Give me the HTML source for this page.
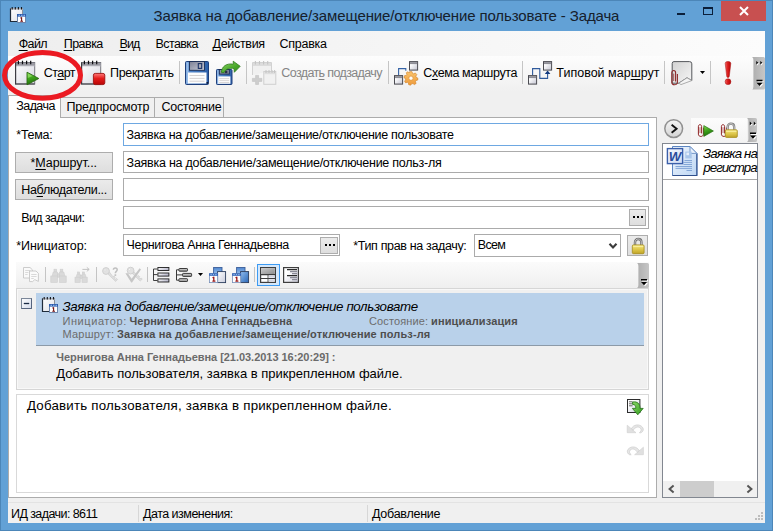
<!DOCTYPE html>
<html lang="ru"><head><meta charset="utf-8"><title>Задача</title>
<style>
html,body{margin:0;padding:0;}
body{width:773px;height:531px;overflow:hidden;position:relative;background:#62a1d6;font-family:"Liberation Sans", sans-serif;}
#w{position:absolute;left:0;top:0;width:773px;height:531px;overflow:hidden;}
#w div{position:absolute;}
.t{position:absolute;white-space:nowrap;font-family:"Liberation Sans", sans-serif;}
.t u{text-decoration:underline;text-underline-offset:2px;text-decoration-thickness:1px;}
.ic svg{display:block;overflow:visible;}
.sec{left:0;top:0;width:0;height:0;}
</style></head>
<body><div id="w">
<div class="sec" id="window-frame">
<div style="left:0px;top:0px;width:773px;height:531px;background:#62a1d6;"></div>
<div style="left:0px;top:0px;width:773px;height:1px;background:#4c86b8;"></div>
<div style="left:0px;top:0px;width:1px;height:531px;background:#4c86b8;"></div>
<div style="left:772px;top:0px;width:1px;height:531px;background:#4c86b8;"></div>
<div style="left:0px;top:530px;width:773px;height:1px;background:#4c86b8;"></div>
<div style="left:8px;top:31px;width:757px;height:492px;background:#f0f0f0;"></div>
</div>
<div class="sec" id="titlebar">
<div class="ic" style="left:10px;top:7px;"><svg width="16" height="16" viewBox="0 0 16 16"><defs><linearGradient id="ap1" x1="0" y1="0" x2="1" y2="1"><stop offset="0" stop-color="#ffffff"/><stop offset="1" stop-color="#dfe1e8"/></linearGradient></defs>
<rect x="0.5" y="1.5" width="12" height="13" fill="url(#ap1)" stroke="#8a8f98"/>
<path d="M0.5 1.5V14.5H12.5" fill="none" stroke="#1f2b3a" stroke-width="1.2"/>
<rect x="1" y="1.5" width="11.5" height="1.5" fill="#c9ccd2"/>
<g stroke="#10151c" stroke-width="1.1"><path d="M2.2 0V2.6M5.3 0V2.6M8.4 0V2.6M11.5 0V2.6"/></g>
<rect x="7.5" y="7.5" width="8" height="8" fill="#fff" stroke="#6d86ad"/>
<rect x="7" y="7" width="9" height="2.6" fill="#2c5cae"/>
<path d="M8.5 8.3H10M11 8.3H12.5M13.5 8.3H15" stroke="#9fc3f0" stroke-width="1"/>
<path d="M11.6 10.2V14M10.3 14.2H13M10.5 11.2L11.6 10.4" stroke="#741212" stroke-width="1.1" fill="none"/>
</svg></div>
<span id="t0" class="t" style="left:153.5px;top:5px;font-size:15px;line-height:21px;color:#16202c;letter-spacing:-0.130px;">Заявка на добавление/замещение/отключение пользовате - Задача</span>
<div style="left:677px;top:13px;width:8px;height:2px;background:#0b1f3a;"></div>
<div style="left:703px;top:7px;width:10px;height:8px;border:1px solid #0b1f3a;border-top-width:2px;box-sizing:border-box;"></div>
<div style="left:721px;top:1px;width:45px;height:20px;background:#c85050;"></div>
<div class="ic" style="left:739px;top:6px;"><svg width="10" height="10" viewBox="0 0 10 10"><path d="M1 1L9 9M9 1L1 9" stroke="#fff" stroke-width="2"/></svg></div>
</div>
<div class="sec" id="menubar">
<div style="left:8px;top:31px;width:757px;height:25px;background:linear-gradient(to right,#eeeeee,#fcfcfc);"></div>
<span id="t1" class="t" style="left:18.7px;top:35px;font-size:12.5px;line-height:18px;color:#000;letter-spacing:-0.588px;"><u>Ф</u>айл</span>
<span id="t2" class="t" style="left:63.7px;top:35px;font-size:12.5px;line-height:18px;color:#000;letter-spacing:-0.522px;"><u>П</u>равка</span>
<span id="t3" class="t" style="left:119.5px;top:35px;font-size:12.5px;line-height:18px;color:#000;letter-spacing:-0.875px;"><u>В</u>ид</span>
<span id="t4" class="t" style="left:155.5px;top:35px;font-size:12.5px;line-height:18px;color:#000;letter-spacing:-0.598px;">Вс<u>т</u>авка</span>
<span id="t5" class="t" style="left:212.5px;top:35px;font-size:12.5px;line-height:18px;color:#000;letter-spacing:-0.310px;"><u>Д</u>ействия</span>
<span id="t6" class="t" style="left:279.5px;top:35px;font-size:12.5px;line-height:18px;color:#000;letter-spacing:-0.250px;">Сп<u>р</u>авка</span>
</div>
<div class="sec" id="toolbar">
<div style="left:8px;top:56px;width:757px;height:35px;background:linear-gradient(#fdfdfd,#f0f0f0);"></div>
<div class="ic" style="left:15px;top:60px;"><svg width="24" height="26" viewBox="0 0 24 26"><defs><linearGradient id="np1" x1="0" y1="0" x2="1" y2="1"><stop offset="0" stop-color="#ffffff"/><stop offset="1" stop-color="#d7d8e2"/></linearGradient><linearGradient id="np1g" x1="0" y1="0" x2="0.3" y2="1"><stop offset="0" stop-color="#7fd84a"/><stop offset="0.5" stop-color="#3fa41c"/><stop offset="1" stop-color="#1f6d0c"/></linearGradient><linearGradient id="np1r" x1="0" y1="0" x2="0" y2="1"><stop offset="0" stop-color="#ff7a7a"/><stop offset="0.45" stop-color="#e41c1c"/><stop offset="1" stop-color="#b80606"/></linearGradient></defs>
<rect x="0.5" y="2.5" width="19.2" height="21.5" fill="url(#np1)" stroke="#77777f"/>
<rect x="1" y="3" width="18.5" height="3" fill="#9b9ba3"/>
<rect x="1" y="5.6" width="18.5" height="0.8" fill="#c9c9d0"/>
<path d="M0.6 2.5V24H19.7" fill="none" stroke="#3c3c42" stroke-width="1.2"/>
<g stroke="#0c0c10" stroke-width="1.2"><path d="M3.4 0.8V4.2M7.5 0.8V4.2M11.6 0.8V4.2M15.7 0.8V4.2"/></g>
<path d="M12 12.2L23.8 18.5L12 24.8Z" fill="url(#np1g)" stroke="#2a6a14" stroke-width="0.9" stroke-linejoin="round"/><path d="M12.8 13.6L17.5 16.1L12.8 18Z" fill="#a6ec7c" opacity="0.55"/></svg></div>
<span id="t7" class="t" style="left:43.7px;top:64px;font-size:12.5px;line-height:18px;color:#000;letter-spacing:-0.537px;">Ст<u>а</u>рт</span>
<div class="ic" style="left:81px;top:60px;"><svg width="24" height="26" viewBox="0 0 24 26"><defs><linearGradient id="np2" x1="0" y1="0" x2="1" y2="1"><stop offset="0" stop-color="#ffffff"/><stop offset="1" stop-color="#d7d8e2"/></linearGradient><linearGradient id="np2g" x1="0" y1="0" x2="0.3" y2="1"><stop offset="0" stop-color="#7fd84a"/><stop offset="0.5" stop-color="#3fa41c"/><stop offset="1" stop-color="#1f6d0c"/></linearGradient><linearGradient id="np2r" x1="0" y1="0" x2="0" y2="1"><stop offset="0" stop-color="#ff7a7a"/><stop offset="0.45" stop-color="#e41c1c"/><stop offset="1" stop-color="#b80606"/></linearGradient></defs>
<rect x="0.5" y="2.5" width="19.2" height="21.5" fill="url(#np2)" stroke="#77777f"/>
<rect x="1" y="3" width="18.5" height="3" fill="#9b9ba3"/>
<rect x="1" y="5.6" width="18.5" height="0.8" fill="#c9c9d0"/>
<path d="M0.6 2.5V24H19.7" fill="none" stroke="#3c3c42" stroke-width="1.2"/>
<g stroke="#0c0c10" stroke-width="1.2"><path d="M3.4 0.8V4.2M7.5 0.8V4.2M11.6 0.8V4.2M15.7 0.8V4.2"/></g>
<rect x="12.4" y="13.4" width="11.4" height="11.2" rx="1.8" fill="url(#np2r)" stroke="#9c1010" stroke-width="0.9"/></svg></div>
<span id="t8" class="t" style="left:110px;top:64px;font-size:12.5px;line-height:18px;color:#000;letter-spacing:-0.315px;">Прекрат<u>и</u>ть</span>
<div style="left:179px;top:61px;width:1px;height:23px;background:#c5c5c5;"></div>
<div style="left:246px;top:61px;width:1px;height:23px;background:#c5c5c5;"></div>
<div style="left:388px;top:61px;width:1px;height:23px;background:#c5c5c5;"></div>
<div style="left:522px;top:61px;width:1px;height:23px;background:#c5c5c5;"></div>
<div style="left:664px;top:61px;width:1px;height:23px;background:#c5c5c5;"></div>
<div style="left:710px;top:61px;width:1px;height:23px;background:#c5c5c5;"></div>
<div class="ic" style="left:185px;top:60px;"><svg width="24" height="25" viewBox="0 0 24 25"><defs><linearGradient id="fl1" x1="0" y1="0" x2="1" y2="0"><stop offset="0" stop-color="#5a8fd2"/><stop offset="1" stop-color="#2c5fa8"/></linearGradient><linearGradient id="fl1s" x1="0" y1="0" x2="1" y2="1"><stop offset="0" stop-color="#7c8094"/><stop offset="1" stop-color="#c9ccd8"/></linearGradient></defs>
<rect x="0.5" y="1.5" width="23" height="23" rx="1" fill="url(#fl1)" stroke="#1e3f7c"/>
<rect x="1.3" y="2.2" width="2.2" height="21.5" fill="#a9c8ee" opacity="0.8"/>
<rect x="4.5" y="1.5" width="15" height="8.8" fill="url(#fl1s)" stroke="#1b2e55" stroke-width="0.9"/>
<rect x="13.3" y="3.6" width="3.4" height="4.8" fill="#a8abb8" stroke="#1c3366" stroke-width="1.1"/>
<rect x="3" y="12.5" width="18.5" height="11" fill="#fdfdfd"/>
<path d="M4.5 15.5H19.5M4.5 18.4H19.5M4.5 21.2H19.5" stroke="#d0cccc" stroke-width="0.9"/>
<rect x="21.5" y="22" width="1.6" height="1.8" fill="#0d1c3c"/>
</svg></div>
<div class="ic" style="left:216px;top:60px;"><svg width="25" height="25" viewBox="0 0 25 25"><defs><linearGradient id="fl2" x1="0" y1="0" x2="1" y2="0"><stop offset="0" stop-color="#5a8fd2"/><stop offset="1" stop-color="#2c5fa8"/></linearGradient><linearGradient id="fl2g" x1="0" y1="0" x2="1" y2="1"><stop offset="0" stop-color="#8ed868"/><stop offset="0.6" stop-color="#4aa82a"/><stop offset="1" stop-color="#2f861a"/></linearGradient></defs>
<rect x="0.5" y="9.5" width="15.5" height="15" rx="0.8" fill="url(#fl2)" stroke="#1e3f7c"/>
<rect x="1.2" y="10.2" width="1.6" height="13.8" fill="#a9c8ee" opacity="0.8"/>
<rect x="3.3" y="9.5" width="10" height="4.6" fill="#8b8fa2" stroke="#1b2e55" stroke-width="0.9"/>
<rect x="9" y="10.6" width="2.4" height="2.6" fill="#2a2f4a"/>
<rect x="2.2" y="16.4" width="12.2" height="7.4" fill="#fdfdfd"/>
<path d="M3.3 18.6H13.2M3.3 20.6H13.2M3.3 22.5H13.2" stroke="#cfcccc" stroke-width="0.8"/>
<path d="M5.4 12.4C5.6 6.5 10.5 3 17.4 4.2L17.2 1.2L24.2 6.3L18.3 12.3L18 8.6C13.5 7.6 9.6 9 8.2 12.6Z" fill="url(#fl2g)" stroke="#2f7a1c" stroke-width="0.8" stroke-linejoin="round"/>
</svg></div>
<div class="ic" style="left:252px;top:60px;"><svg width="25" height="25" viewBox="0 0 25 25">
<path d="M0.5 15V2.5H19.5V11" fill="#f0f0f0" stroke="#d2d2d2"/>
<rect x="1" y="3" width="18" height="3" fill="#dcdcdc"/>
<g stroke="#c4c4c4" stroke-width="1.1"><path d="M3.4 1V4.4M7.5 1V4.4M11.6 1V4.4M15.7 1V4.4"/></g>
<rect x="11.8" y="11.5" width="12" height="12.8" fill="#f1f1f1" stroke="#cfcfcf"/>
<rect x="12.3" y="12" width="11" height="2.2" fill="#dedede"/>
<g stroke="#c4c4c4" stroke-width="1"><path d="M14 10V13M17 10V13M20 10V13M22.6 10V13"/></g>
<path d="M3.6 15.4H6.6V18.4H9.8V21.4H6.6V24.4H3.6V21.4H0.4V18.4H3.6Z" fill="#cdcdcd" stroke="#c0c0c0" stroke-width="0.6"/>
</svg></div>
<span id="t9" class="t" style="left:281.3px;top:64px;font-size:12.5px;line-height:18px;color:#858585;letter-spacing:-0.627px;">Создат<u>ь</u> подзадачу</span>
<div class="ic" style="left:394px;top:60px;"><svg width="25" height="25" viewBox="0 0 25 25"><defs><linearGradient id="sc1" x1="0" y1="0" x2="1" y2="1"><stop offset="0.25" stop-color="#ffffff"/><stop offset="1" stop-color="#c4c5d2"/></linearGradient><linearGradient id="sc1o" x1="0" y1="0" x2="0" y2="1"><stop offset="0" stop-color="#fbc46c"/><stop offset="1" stop-color="#ee9a3a"/></linearGradient></defs>
<path d="M4.6 15V8.6H11.8V10.8" fill="none" stroke="#3563a6" stroke-width="1.1"/>
<rect x="15.5" y="1.6" width="8.1" height="8.5" fill="url(#sc1)" stroke="#4c4c52"/><rect x="16" y="2.1" width="7.1" height="2" fill="#8e8e96"/><rect x="0.5" y="15.6" width="8.1" height="8.5" fill="url(#sc1)" stroke="#4c4c52"/><rect x="1" y="16.1" width="7.1" height="2" fill="#8e8e96"/>
<g transform="translate(16.8 18) scale(0.92)">
<path d="M-1.3 -6.9H1.3L1.8 -5.1L3.2 -4.5L4.9 -5.5L6.6 -3.6L5.4 -2.1L5.9 -0.7L7.6 0.1V2.2L5.7 2.7L5 4.1L5.8 5.9L3.8 7.2L2.4 6L0.9 6.3L-0.2 7.8L-2.4 7.2L-2.5 5.5L-3.8 4.7L-5.6 5.3L-6.8 3.4L-5.6 2.1L-5.8 0.6L-7.4 -0.3L-6.9 -2.5L-5.1 -2.7L-4.2 -4L-4.9 -5.7L-3 -6.8L-1.8 -5.5Z" fill="url(#sc1o)" stroke="#d2832a" stroke-width="0.7" stroke-linejoin="round"/>
<circle cx="0.2" cy="0.2" r="2.3" fill="#fffdf6" stroke="#d88c30" stroke-width="0.7"/>
</g>
</svg></div>
<span id="t10" class="t" style="left:423.3px;top:64px;font-size:12.5px;line-height:18px;color:#000;letter-spacing:-0.398px;">С<u>х</u>ема маршрута</span>
<div class="ic" style="left:528px;top:60px;"><svg width="25" height="25" viewBox="0 0 25 25"><defs><linearGradient id="ty1" x1="0" y1="0" x2="1" y2="1"><stop offset="0.25" stop-color="#ffffff"/><stop offset="1" stop-color="#c4c5d2"/></linearGradient></defs>
<path d="M4.6 15V8.6H11.8V18.4H19.6V13" fill="none" stroke="#2f5a9c" stroke-width="1.1"/>
<path d="M19.6 10.6L22.4 14H16.8Z" fill="#123a80"/>
<rect x="15.5" y="1.6" width="8.1" height="8.5" fill="url(#ty1)" stroke="#4c4c52"/><rect x="16" y="2.1" width="7.1" height="2" fill="#8e8e96"/><rect x="0.5" y="15.6" width="8.1" height="8.5" fill="url(#ty1)" stroke="#4c4c52"/><rect x="1" y="16.1" width="7.1" height="2" fill="#8e8e96"/>
</svg></div>
<span id="t11" class="t" style="left:556.3px;top:64px;font-size:12.5px;line-height:18px;color:#000;letter-spacing:0.011px;">Типовой мар<u>ш</u>рут</span>
<div class="ic" style="left:670px;top:61px;"><svg width="23" height="25" viewBox="0 0 23 25"><defs><linearGradient id="cn1" x1="0" y1="0" x2="1" y2="1"><stop offset="0" stop-color="#d2d2d2"/><stop offset="1" stop-color="#f6f6f6"/></linearGradient></defs>
<path d="M4 0.6H19.5Q21.8 0.6 21.8 2.8V19.6L17 16.8L8.8 22.2H2.2V2.4Q2.2 0.6 4 0.6Z" fill="url(#cn1)" stroke="#55585c" stroke-width="1"/>
<path d="M8.8 22.2L17 16.8L21.8 19.6L11 23.6Z" fill="#f4f4f4" stroke="#9a9a9a" stroke-width="0.8"/>
<path d="M5.6 20.5V11.8C5.6 8.8 1.8 8.8 1.8 11.8V21.2C1.8 24.6 7.4 24.6 7.4 21.2V13" fill="none" stroke="#8e2a2a" stroke-width="1.1"/>
<path d="M3.7 20V12.6" stroke="#a04444" stroke-width="0.9"/>
</svg></div>
<div class="ic" style="left:700px;top:71px;"><svg width="5" height="3" viewBox="0 0 5 3"><path d="M0 0H5L2.5 3Z" fill="#000"/></svg></div>
<div class="ic" style="left:724px;top:61px;"><svg width="8" height="25" viewBox="0 0 8 25"><defs><linearGradient id="ex1" x1="0" y1="0" x2="1" y2="0"><stop offset="0" stop-color="#f26a6a"/><stop offset="0.45" stop-color="#dc1c1c"/><stop offset="1" stop-color="#b40808"/></linearGradient></defs>
<path d="M1.2 2.4Q1.2 0.4 4 0.4Q6.8 0.4 6.8 2.4L5.3 15.2Q5.2 16.4 4 16.4Q2.8 16.4 2.7 15.2Z" fill="url(#ex1)" stroke="#a30a0a" stroke-width="0.5"/>
<circle cx="4" cy="20.7" r="2.9" fill="url(#ex1)" stroke="#a30a0a" stroke-width="0.5"/>
</svg></div>
<div class="ic" style="left:752px;top:57px;"><svg width="13" height="32.5" viewBox="0 0 13 32.5"><defs><linearGradient id="ov1332" x1="0" y1="0" x2="1" y2="0"><stop offset="0" stop-color="#aeaeae"/><stop offset="1" stop-color="#c6c6c6"/></linearGradient></defs>
<path d="M0 0H11.5Q13 0 13 1.5V31.0Q13 32.5 11.5 32.5H0Q1.4 32.1 1.4 29.5V3Q1.4 0.4 0 0Z" fill="url(#ov1332)"/>
<path d="M5.0 5v3.6l2-1.8zM9.0 5v3.6l2-1.8z" fill="#fff"/><path d="M4.3 4v3.6l2-1.8zM8.3 4v3.6l2-1.8z" fill="#000"/>
<path d="M5.5 23.8h6v1.4h-6zM5.5 26.8h6l-3 3.2z" fill="#fff"/>
<path d="M4.5 22.8h6v1.4h-6zM4.5 25.8h6l-3 3.2z" fill="#000"/>
</svg></div>
</div>
<div class="sec" id="tabs">
<div style="left:8px;top:117px;width:649px;height:381px;background:#fff;border:1px solid #acacac;box-sizing:border-box;"></div>
<div style="left:60px;top:97px;width:95px;height:21px;background:#f0f0f0;border:1px solid #acacac;box-sizing:border-box;border-bottom:none;height:20px;"></div>
<div style="left:154px;top:97px;width:70px;height:21px;background:#f0f0f0;border:1px solid #acacac;box-sizing:border-box;border-bottom:none;height:20px;"></div>
<div style="left:8px;top:95px;width:53px;height:23px;background:#fff;border:1px solid #acacac;border-bottom:none;box-sizing:border-box;"></div>
<span id="t12" class="t" style="left:16.3px;top:97px;font-size:12.5px;line-height:18px;color:#000;letter-spacing:-0.573px;">Задача</span>
<span id="t13" class="t" style="left:66.5px;top:98px;font-size:12.5px;line-height:18px;color:#000;letter-spacing:-0.165px;">Предпросмотр</span>
<span id="t14" class="t" style="left:161.5px;top:98px;font-size:12.5px;line-height:18px;color:#000;letter-spacing:-0.286px;">Состояние</span>
</div>
<div class="sec" id="task-form">
<span id="t15" class="t" style="left:16.3px;top:126px;font-size:12.5px;line-height:18px;color:#000;letter-spacing:-0.264px;">*Тема:</span>
<span id="t16" class="t" style="left:21.2px;top:209px;font-size:12.5px;line-height:18px;color:#000;letter-spacing:-0.593px;">Вид задачи:</span>
<span id="t17" class="t" style="left:16.2px;top:237px;font-size:12.5px;line-height:18px;color:#000;letter-spacing:-0.065px;">*Инициатор:</span>
<span id="t18" class="t" style="left:353.2px;top:237px;font-size:12.5px;line-height:18px;color:#000;letter-spacing:-0.344px;">*Тип прав на задачу:</span>
<div style="left:15px;top:152px;width:98px;height:21px;background:linear-gradient(#ebebeb,#dedede);border:1px solid #adadad;box-sizing:border-box;"></div>
<span id="t19" class="t" style="left:30.5px;top:154px;font-size:12.5px;line-height:18px;color:#000;letter-spacing:-0.064px;">*<u>М</u>аршрут...</span>
<div style="left:15px;top:179px;width:98px;height:21px;background:linear-gradient(#ebebeb,#dedede);border:1px solid #adadad;box-sizing:border-box;"></div>
<span id="t20" class="t" style="left:21.2px;top:181px;font-size:12.5px;line-height:18px;color:#000;letter-spacing:-0.284px;">На<u>б</u>людатели...</span>
<div style="left:123px;top:123px;width:526px;height:23px;background:#fff;border:1px solid #6ea8e2;box-sizing:border-box;"></div>
<div style="left:123px;top:151px;width:526px;height:22px;background:#fff;border:1px solid #ababab;box-sizing:border-box;"></div>
<div style="left:123px;top:178px;width:526px;height:23px;background:#fff;border:1px solid #ababab;box-sizing:border-box;"></div>
<div style="left:123px;top:206px;width:526px;height:23px;background:#fff;border:1px solid #ababab;box-sizing:border-box;"></div>
<div style="left:123px;top:234px;width:217px;height:22px;background:#fff;border:1px solid #ababab;box-sizing:border-box;"></div>
<span id="t21" class="t" style="left:126.6px;top:126px;font-size:12.5px;line-height:18px;color:#000;letter-spacing:-0.279px;">Заявка на добавление/замещение/отключение пользовате</span>
<span id="t22" class="t" style="left:126.6px;top:154px;font-size:12.5px;line-height:18px;color:#000;letter-spacing:-0.250px;">Заявка на добавление/замещение/отключение польз-ля</span>
<span id="t23" class="t" style="left:126.6px;top:236px;font-size:12.5px;line-height:18px;color:#000;letter-spacing:-0.367px;">Чернигова Анна Геннадьевна</span>
<div style="left:629px;top:209px;width:17px;height:17px;background:linear-gradient(#ebebeb,#dedede);border:1px solid #adadad;box-sizing:border-box;"></div>
<div class="ic" style="left:633px;top:216px;"><svg width="10" height="2" viewBox="0 0 10 2"><path d="M0 0h2v2h-2zM4 0h2v2h-2zM8 0h2v2h-2z" fill="#000"/></svg></div>
<div style="left:320px;top:237px;width:18px;height:17px;background:linear-gradient(#ebebeb,#dedede);border:1px solid #adadad;box-sizing:border-box;"></div>
<div class="ic" style="left:325px;top:244px;"><svg width="10" height="2" viewBox="0 0 10 2"><path d="M0 0h2v2h-2zM4 0h2v2h-2zM8 0h2v2h-2z" fill="#000"/></svg></div>
<div style="left:474px;top:234px;width:147px;height:23px;background:#fff;border:1px solid #ababab;box-sizing:border-box;"></div>
<span id="t24" class="t" style="left:477.7px;top:236px;font-size:12.5px;line-height:18px;color:#000;letter-spacing:-0.635px;">Всем</span>
<div class="ic" style="left:609px;top:243px;"><svg width="8" height="6" viewBox="0 0 8 6"><path d="M0.5 0.7L4 4.5L7.5 0.7" fill="none" stroke="#3c3c3c" stroke-width="2.1"/></svg></div>
<div style="left:627px;top:235px;width:21px;height:21px;background:linear-gradient(#ebebeb,#dedede);border:1px solid #adadad;box-sizing:border-box;"></div>
<div class="ic" style="left:630px;top:237px;"><svg width="16" height="18" viewBox="0 0 16 18"><defs><linearGradient id="lk1" x1="0" y1="0" x2="0" y2="1"><stop offset="0" stop-color="#f4e67a"/><stop offset="0.55" stop-color="#dcc548"/><stop offset="1" stop-color="#c0a428"/></linearGradient></defs>
<path d="M5 9V5.2C5 0.9 11.4 0.9 11.4 5.2V9" fill="none" stroke="#6c6c6c" stroke-width="2.4"/>
<path d="M5 9V5.2C5 0.9 11.4 0.9 11.4 5.2V9" fill="none" stroke="#d6d6d6" stroke-width="0.8"/>
<rect x="2.3" y="7.9" width="11.8" height="8.8" rx="1.2" fill="url(#lk1)" stroke="#a48c1c" stroke-width="0.8"/>
<rect x="3.2" y="8.8" width="10" height="1.3" fill="#fbf3a8" opacity="0.8"/>
</svg></div>
</div>
<div class="sec" id="history-toolbar">
<div style="left:16px;top:262px;width:633px;height:26px;background:linear-gradient(#fbfbfb,#efefef);"></div>
<div class="ic" style="left:23px;top:267px;"><svg width="16" height="16" viewBox="0 0 16 16">
<path d="M0.5 0.5H7L9.4 2.8V11H0.5Z" fill="#fafafa" stroke="#c6c6c6" stroke-width="0.9"/>
<path d="M2.2 3.5H7.4M2.2 5.5H5.4M2.2 7.5H4.6" stroke="#d2d2d2" stroke-width="0.8"/>
<path d="M6.5 4H13L15.4 6.4V14.4L11.8 12.6L9.6 14.6H6.5Z" fill="#fbfbfb" stroke="#c6c6c6" stroke-width="0.9"/>
<path d="M8.2 7.5H13.6M8.2 9.5H13.6M8.2 11.5H10.8" stroke="#d0d0d0" stroke-width="0.8"/>
</svg></div>
<div class="ic" style="left:50px;top:267px;"><svg width="17" height="16" viewBox="0 0 17 16">
<g fill="#dadada" stroke="#cecece" stroke-width="0.6">
<rect x="4" y="2.2" width="2.6" height="3"/><rect x="10.2" y="2.2" width="2.6" height="3"/>
<path d="M3.2 5H7.4L8 8.6H9L9.6 5H13.8L15 9.5H2Z"/>
<rect x="0.8" y="9" width="6.6" height="6.4"/><rect x="9.6" y="9" width="6.6" height="6.4"/>
<rect x="7.4" y="6.8" width="2.2" height="3.4"/>
</g></svg></div>
<div class="ic" style="left:74px;top:267px;"><svg width="17" height="16" viewBox="0 0 17 16">
<g fill="#dadada" stroke="#cecece" stroke-width="0.6">
<rect x="3.6" y="5" width="2" height="2.4"/><rect x="8.4" y="5" width="2" height="2.4"/>
<path d="M3 7.2H6.2L6.8 10H7.4L8 7.2H11.2L12.2 10.6H2Z"/>
<rect x="1" y="10.2" width="5.2" height="5.2"/><rect x="8" y="10.2" width="5.2" height="5.2"/>
<rect x="6.2" y="8.6" width="1.8" height="2.8"/>
</g>
<path d="M8.4 2.4H15M12.8 0.4L15.2 2.4L12.8 4.4" fill="none" stroke="#c2c2c2" stroke-width="1"/></svg></div>
<div class="ic" style="left:102px;top:267px;"><svg width="17" height="16" viewBox="0 0 17 16"><path d="M5.4 6.6L13.6 14.4L15.6 12.6L14.6 11.4L13.4 12.2L12.4 11.2L13.2 10.2L12 9L11 9.8L7.4 5Z" fill="#dedede" stroke="#cfcfcf" stroke-width="0.7"/><circle cx="4" cy="4" r="3.4" fill="#e2e2e2" stroke="#cdcdcd" stroke-width="0.9"/><circle cx="3" cy="3" r="1" fill="#f8f8f8" stroke="#d2d2d2" stroke-width="0.5"/>
<path d="M11.4 2.8C11.4 0.4 15.2 0.4 15.2 2.8C15.2 4.4 13.3 4.4 13.3 6.2" fill="none" stroke="#bfbfbf" stroke-width="1.5"/>
<rect x="12.5" y="7.3" width="1.7" height="1.6" fill="#bfbfbf"/></svg></div>
<div class="ic" style="left:125px;top:267px;"><svg width="17" height="16" viewBox="0 0 17 16"><g transform="translate(1.6 -0.4)"><path d="M5.4 6.6L13.6 14.4L15.6 12.6L14.6 11.4L13.4 12.2L12.4 11.2L13.2 10.2L12 9L11 9.8L7.4 5Z" fill="#dedede" stroke="#cfcfcf" stroke-width="0.7"/><circle cx="4" cy="4" r="3.4" fill="#e2e2e2" stroke="#cdcdcd" stroke-width="0.9"/><circle cx="3" cy="3" r="1" fill="#f8f8f8" stroke="#d2d2d2" stroke-width="0.5"/></g>
<path d="M0.4 6.2L2.8 6.2L6.6 11.8L14.6 1.2L16 2.4L7 15.4H6.2Z" fill="#c6c6c6"/></svg></div>
<div class="ic" style="left:153px;top:267px;"><svg width="17" height="16" viewBox="0 0 17 16"><defs><linearGradient id="tr1" x1="0" y1="0" x2="1" y2="0.4"><stop offset="0" stop-color="#ffffff"/><stop offset="1" stop-color="#b9b9cc"/></linearGradient></defs>
<path d="M0.5 2V13.5H4.5M0.5 2H4.5M0.5 7.6H4.5" fill="none" stroke="#2a2a2a" stroke-width="0.9"/>
<g fill="url(#tr1)" stroke="#1e1e1e" stroke-width="0.9">
<rect x="4.9" y="0.5" width="11" height="3"/><rect x="4.9" y="6" width="11" height="3.1"/><rect x="4.9" y="11.9" width="11" height="3.1"/></g>
</svg></div>
<div class="ic" style="left:176px;top:267px;"><svg width="17" height="16" viewBox="0 0 17 16"><defs><linearGradient id="tr2" x1="0" y1="0" x2="0" y2="1"><stop offset="0" stop-color="#dcdcdc"/><stop offset="1" stop-color="#8c8c8c"/></linearGradient></defs>
<path d="M0.5 2.8V13.2H3M0.5 2.8H3M0.5 7.9H6.5" fill="none" stroke="#3a3a3a" stroke-width="1"/>
<g fill="url(#tr2)" stroke="#3c3c3c" stroke-width="1">
<rect x="2.9" y="1.5" width="8.6" height="2.7" rx="0.6"/><rect x="6.6" y="6.4" width="9" height="3" rx="0.6"/><rect x="2.9" y="11.7" width="8.6" height="2.8" rx="0.6"/></g>
</svg></div>
<div class="ic" style="left:198px;top:273px;"><svg width="5" height="3" viewBox="0 0 5 3"><path d="M0 0H5L2.5 3Z" fill="#000"/></svg></div>
<div class="ic" style="left:209px;top:267px;"><svg width="17" height="16" viewBox="0 0 17 16"><defs><linearGradient id="c3b" x1="0" y1="0" x2="0" y2="1"><stop offset="0" stop-color="#4f86cf"/><stop offset="1" stop-color="#a9cdf2"/></linearGradient><linearGradient id="c3f" x1="0" y1="0" x2="1" y2="1"><stop offset="0" stop-color="#ffffff"/><stop offset="1" stop-color="#c9ccdc"/></linearGradient></defs>
<rect x="4.6" y="0.5" width="8.4" height="8" fill="url(#c3b)" stroke="#3c5f9a" stroke-width="0.9"/>
<rect x="8.6" y="4.6" width="8" height="11" fill="url(#c3f)" stroke="#2b3c5c" stroke-width="0.9"/>
<rect x="0.5" y="6.6" width="8.2" height="9" fill="#fff" stroke="#7890b8" stroke-width="0.8"/>
<rect x="0.2" y="6.4" width="8.8" height="2.4" fill="#2e62b8"/>
<path d="M1.4 7.6H2.8M3.8 7.6H5.2M6.2 7.6H7.6" stroke="#a9ccf4" stroke-width="0.9"/>
<path d="M4.8 9.8V14M3.4 14.2H6.4M3.6 10.9L4.8 10" stroke="#9a1818" stroke-width="1.3" fill="none"/>
</svg></div>
<div class="ic" style="left:232px;top:267px;"><svg width="17" height="16" viewBox="0 0 17 16"><defs><linearGradient id="c4b" x1="0" y1="0" x2="0" y2="1"><stop offset="0" stop-color="#4f86cf"/><stop offset="1" stop-color="#a9cdf2"/></linearGradient><linearGradient id="c4f" x1="0" y1="0" x2="1" y2="1"><stop offset="0" stop-color="#8fbcee"/><stop offset="1" stop-color="#2a66b6"/></linearGradient></defs>
<rect x="4.6" y="0.5" width="8.4" height="8" fill="url(#c4b)" stroke="#3c5f9a" stroke-width="0.9"/>
<rect x="8.6" y="4.6" width="8" height="11" fill="url(#c4f)" stroke="#2b3c5c" stroke-width="0.9"/>
<rect x="0.5" y="6.6" width="8.2" height="9" fill="#fff" stroke="#7890b8" stroke-width="0.8"/>
<rect x="0.2" y="6.4" width="8.8" height="2.4" fill="#2e62b8"/>
<path d="M1.4 7.6H2.8M3.8 7.6H5.2M6.2 7.6H7.6" stroke="#a9ccf4" stroke-width="0.9"/>
<path d="M4.8 9.8V14M3.4 14.2H6.4M3.6 10.9L4.8 10" stroke="#9a1818" stroke-width="1.3" fill="none"/>
</svg></div>
<div style="left:45px;top:267px;width:1px;height:15px;background:#c4c4c4;"></div>
<div style="left:96px;top:267px;width:1px;height:15px;background:#c4c4c4;"></div>
<div style="left:147px;top:267px;width:1px;height:15px;background:#c4c4c4;"></div>
<div style="left:254px;top:267px;width:1px;height:15px;background:#c4c4c4;"></div>
<div style="left:257px;top:264px;width:23px;height:22px;background:#d5e8fb;border:1px solid #3d9bf3;box-sizing:border-box;"></div>
<div class="ic" style="left:260px;top:267px;"><svg width="16" height="16" viewBox="0 0 16 16"><defs><linearGradient id="gr1" x1="0" y1="0" x2="1" y2="1"><stop offset="0" stop-color="#c9c9c9"/><stop offset="1" stop-color="#8f8f8f"/></linearGradient></defs>
<rect x="0.6" y="0.6" width="14.8" height="14.8" fill="#fff" stroke="#3e3e3e" stroke-width="1.2"/>
<rect x="1.2" y="1.2" width="13.6" height="6" fill="url(#gr1)"/>
<path d="M0.6 7.6H15.4M0.6 11.5H15.4" stroke="#3e3e3e" stroke-width="1.2"/><path d="M8 7.4V15.4" stroke="#4a4a4a" stroke-width="0.9"/>
<rect x="9" y="8.4" width="5.6" height="2.2" fill="#d4d6e2"/><rect x="9" y="12.4" width="5.6" height="2.2" fill="#d4d6e2"/>
</svg></div>
<div class="ic" style="left:283px;top:267px;"><svg width="16" height="16" viewBox="0 0 16 16"><defs><linearGradient id="ln1" x1="0" y1="0" x2="1" y2="1"><stop offset="0.3" stop-color="#ffffff"/><stop offset="1" stop-color="#cfd0de"/></linearGradient></defs>
<rect x="0.6" y="0.6" width="14.8" height="14.8" fill="url(#ln1)" stroke="#3e3e3e" stroke-width="1.2"/>
<path d="M4 2.6H14M4 8.6H14" stroke="#2a2a2a" stroke-width="1.1"/>
<path d="M7 4.6H14M9 6.6H14M7 10.6H14M9 12.6H14" stroke="#8a8a96" stroke-width="1.1"/>
</svg></div>
<div class="ic" style="left:637px;top:263px;"><svg width="12" height="25" viewBox="0 0 12 25"><defs><linearGradient id="ov1225" x1="0" y1="0" x2="1" y2="0"><stop offset="0" stop-color="#aeaeae"/><stop offset="1" stop-color="#c6c6c6"/></linearGradient></defs>
<path d="M0 0H10.5Q12 0 12 1.5V23.5Q12 25 10.5 25H0Q1.4 24.6 1.4 22V3Q1.4 0.4 0 0Z" fill="url(#ov1225)"/>

<path d="M5.0 17h6v1.4h-6zM5.0 20h6l-3 3.2z" fill="#fff"/>
<path d="M4.0 16h6v1.4h-6zM4.0 19h6l-3 3.2z" fill="#000"/>
</svg></div>
</div>
<div class="sec" id="history-list">
<div style="left:16px;top:288px;width:633px;height:102px;background:#f0f0f0;border:1px solid #d6d6d6;box-sizing:border-box;box-shadow:inset 0 0 0 1px #f8f8f8;"></div>
<div style="left:36px;top:293px;width:608px;height:52px;background:#b9d1ea;"></div>
<div style="left:36px;top:345px;width:608px;height:1px;background:#8c9aa8;"></div>
<div class="ic" style="left:21px;top:298px;"><svg width="11" height="11" viewBox="0 0 11 11"><defs><linearGradient id="mn1" x1="0" y1="0" x2="1" y2="1"><stop offset="0" stop-color="#ffffff"/><stop offset="1" stop-color="#d3daea"/></linearGradient></defs>
<rect x="0.5" y="0.5" width="10" height="10" fill="url(#mn1)" stroke="#7b8799"/>
<path d="M0.5 10.5H10.5V0.5" fill="none" stroke="#56647e" stroke-width="1"/>
<path d="M2.8 5.5H8.2" stroke="#1a2a44" stroke-width="1.3"/>
</svg></div>
<div class="ic" style="left:42px;top:297px;"><svg width="16" height="16" viewBox="0 0 16 16"><defs><linearGradient id="ap1" x1="0" y1="0" x2="1" y2="1"><stop offset="0" stop-color="#ffffff"/><stop offset="1" stop-color="#dfe1e8"/></linearGradient></defs>
<rect x="0.5" y="1.5" width="12" height="13" fill="url(#ap1)" stroke="#8a8f98"/>
<path d="M0.5 1.5V14.5H12.5" fill="none" stroke="#1f2b3a" stroke-width="1.2"/>
<rect x="1" y="1.5" width="11.5" height="1.5" fill="#c9ccd2"/>
<g stroke="#10151c" stroke-width="1.1"><path d="M2.2 0V2.6M5.3 0V2.6M8.4 0V2.6M11.5 0V2.6"/></g>
<rect x="7.5" y="7.5" width="8" height="8" fill="#fff" stroke="#6d86ad"/>
<rect x="7" y="7" width="9" height="2.6" fill="#2c5cae"/>
<path d="M8.5 8.3H10M11 8.3H12.5M13.5 8.3H15" stroke="#9fc3f0" stroke-width="1"/>
<path d="M11.6 10.2V14M10.3 14.2H13M10.5 11.2L11.6 10.4" stroke="#741212" stroke-width="1.1" fill="none"/>
</svg></div>
<span id="t25" class="t" style="left:62.5px;top:297px;font-size:13.3px;line-height:19px;color:#000;font-style:italic;letter-spacing:-0.345px;">Заявка на добавление/замещение/отключение пользовате</span>
<span id="t26" class="t" style="left:62.5px;top:313px;font-size:11px;line-height:16px;color:#6c6c6c;letter-spacing:0.564px;">Инициатор:</span>
<span id="t27" class="t" style="left:129.5px;top:313px;font-size:11px;line-height:16px;color:#4e4e4e;font-weight:bold;letter-spacing:0.026px;">Чернигова Анна Геннадьевна</span>
<span id="t28" class="t" style="left:369px;top:313px;font-size:11px;line-height:16px;color:#6c6c6c;letter-spacing:0.135px;">Состояние:</span>
<span id="t29" class="t" style="left:431px;top:313px;font-size:11px;line-height:16px;color:#4e4e4e;font-weight:bold;letter-spacing:0.142px;">инициализация</span>
<span id="t30" class="t" style="left:62.5px;top:326px;font-size:11px;line-height:16px;color:#6c6c6c;letter-spacing:0.233px;">Маршрут:</span>
<span id="t31" class="t" style="left:117px;top:326px;font-size:11px;line-height:16px;color:#4e4e4e;font-weight:bold;letter-spacing:0.127px;">Заявка на добавление/замещение/отключение польз-ля</span>
<span id="t32" class="t" style="left:56.2px;top:349px;font-size:11px;line-height:16px;color:#6b6b6b;font-weight:bold;letter-spacing:-0.037px;">Чернигова Анна Геннадьевна [21.03.2013 16:20:29] :</span>
<span id="t33" class="t" style="left:56.2px;top:364px;font-size:13px;line-height:19px;color:#000;letter-spacing:-0.001px;">Добавить пользователя, заявка в прикрепленном файле.</span>
</div>
<div class="sec" id="comment-box">
<div style="left:16px;top:394px;width:633px;height:99px;background:#fff;border:1px solid #d9d9d9;box-sizing:border-box;"></div>
<span id="t34" class="t" style="left:27px;top:396px;font-size:13.3px;line-height:19px;color:#000;letter-spacing:0.202px;">Добавить пользователя, заявка в прикрепленном файле.</span>
<div class="ic" style="left:627px;top:399px;"><svg width="17" height="17" viewBox="0 0 17 17"><defs><linearGradient id="da1" x1="0" y1="0" x2="1" y2="1"><stop offset="0.3" stop-color="#ffffff"/><stop offset="1" stop-color="#c9cbdc"/></linearGradient><linearGradient id="da1g" x1="0" y1="0" x2="1" y2="1"><stop offset="0" stop-color="#8ad866"/><stop offset="1" stop-color="#2f9a1c"/></linearGradient></defs>
<rect x="0.5" y="0.5" width="12.4" height="13" fill="url(#da1)" stroke="#2c2c2c"/>
<path d="M2 2.8H5.6M2 4.8H5.6M2 6.8H5.6" stroke="#555" stroke-width="0.9"/>
<path d="M5.6 3C10.5 2.2 13.2 5 13 9.4L16.2 9.4L10.8 15.8L5.4 9.4L8.8 9.4C9 7 8 5.4 5.6 5.4Z" fill="url(#da1g)" stroke="#257018" stroke-width="0.8" stroke-linejoin="round"/>
</svg></div>
<div class="ic" style="left:627px;top:424px;"><svg width="17" height="10" viewBox="0 0 17 10">
<path d="M0.2 1.2V8.7H9Z" fill="#e0e0e0" stroke="#d0d0d0" stroke-width="0.6"/>
<path d="M4.4 4.6C6.4 0.6 12.4 -0.6 15.6 3.4C17.2 5.6 15.8 8 13.8 8.8L12.4 8.7C14 7.6 14.6 5.8 13.6 4.4C11.6 2 8.2 2.8 6.2 6.3Z" fill="#e6e6e6" stroke="#cccccc" stroke-width="0.7"/></svg></div>
<div class="ic" style="left:627px;top:446px;"><svg width="17" height="10" viewBox="0 0 17 10">
<g transform="translate(16.6 0) scale(-1 1)">
<path d="M0.2 1.2V8.7H9Z" fill="#e0e0e0" stroke="#d0d0d0" stroke-width="0.6"/>
<path d="M4.4 4.6C6.4 0.6 12.4 -0.6 15.6 3.4C17.2 5.6 15.8 8 13.8 8.8L12.4 8.7C14 7.6 14.6 5.8 13.6 4.4C11.6 2 8.2 2.8 6.2 6.3Z" fill="#e6e6e6" stroke="#cccccc" stroke-width="0.7"/></g></svg></div>
</div>
<div class="sec" id="attachments">
<div class="ic" style="left:664px;top:119px;"><svg width="20" height="20" viewBox="0 0 20 20"><defs><linearGradient id="rb1" x1="0" y1="0" x2="0" y2="1"><stop offset="0" stop-color="#f4f4f4"/><stop offset="1" stop-color="#d4d4d4"/></linearGradient></defs>
<circle cx="9.7" cy="9.6" r="8.9" fill="url(#rb1)" stroke="#909090" stroke-width="1.5"/>
<path d="M7.6 5.8L12.6 9.8L7.6 13.8" fill="none" stroke="#111" stroke-width="1.9"/>
</svg></div>
<div style="left:691px;top:118px;width:56px;height:24px;background:linear-gradient(#fcfcfc,#f3f3f3);"></div>
<div class="ic" style="left:697px;top:122px;"><svg width="17" height="17" viewBox="0 0 17 17"><defs><linearGradient id="cp1" x1="0" y1="0" x2="0.3" y2="1"><stop offset="0" stop-color="#86dc52"/><stop offset="0.5" stop-color="#3fa41c"/><stop offset="1" stop-color="#1f6d0c"/></linearGradient></defs><g transform="translate(0.4 0)"><path d="M4.2 11.4V4.6C4.2 2 1 2 1 4.6V12.2C1 15.2 6 15.2 6 12.2V5.6" fill="none" stroke="#8e2222" stroke-width="1"/><path d="M2.6 11V5.2" stroke="#a04040" stroke-width="0.7"/></g>
<path d="M6.8 3.6L16.4 9L6.8 14.4Z" fill="url(#cp1)" stroke="#2a7414" stroke-width="0.7" stroke-linejoin="round"/>
</svg></div>
<div class="ic" style="left:720px;top:121px;"><svg width="18" height="18" viewBox="0 0 18 18"><defs><linearGradient id="cl1" x1="0" y1="0" x2="0" y2="1"><stop offset="0" stop-color="#f4e67a"/><stop offset="0.55" stop-color="#dcc548"/><stop offset="1" stop-color="#c0a428"/></linearGradient></defs><g transform="translate(0.4 1)"><path d="M4.2 11.4V4.6C4.2 2 1 2 1 4.6V12.2C1 15.2 6 15.2 6 12.2V5.6" fill="none" stroke="#8e2222" stroke-width="1"/><path d="M2.6 11V5.2" stroke="#a04040" stroke-width="0.7"/></g>
<path d="M7.6 9.6V6C7.6 1.6 14.2 1.6 14.2 6V9.6" fill="none" stroke="#7a7a7a" stroke-width="2.3"/>
<path d="M7.6 9.6V6C7.6 1.6 14.2 1.6 14.2 6V9.6" fill="none" stroke="#dedede" stroke-width="0.8"/>
<rect x="5.3" y="8.8" width="12" height="7.6" rx="1.1" fill="url(#cl1)" stroke="#a48c1c" stroke-width="0.8"/>
<rect x="6.2" y="9.7" width="10.2" height="1.2" fill="#fbf3a8" opacity="0.8"/>
</svg></div>
<div class="ic" style="left:747px;top:118px;"><svg width="10" height="24" viewBox="0 0 10 24"><defs><linearGradient id="ov1024" x1="0" y1="0" x2="1" y2="0"><stop offset="0" stop-color="#aeaeae"/><stop offset="1" stop-color="#c6c6c6"/></linearGradient></defs>
<path d="M0 0H8.5Q10 0 10 1.5V22.5Q10 24 8.5 24H0Q1.4 23.6 1.4 21V3Q1.4 0.4 0 0Z" fill="url(#ov1024)"/>
<path d="M3.5 4.6v3.6l2-1.8zM7.5 4.6v3.6l2-1.8z" fill="#fff"/><path d="M2.8 3.6v3.6l2-1.8zM6.8 3.6v3.6l2-1.8z" fill="#000"/>
<path d="M4.0 15.6h6v1.4h-6zM4.0 18.6h6l-3 3.2z" fill="#fff"/>
<path d="M3.0 14.6h6v1.4h-6zM3.0 17.6h6l-3 3.2z" fill="#000"/>
</svg></div>
<div style="left:662px;top:143px;width:96px;height:355px;background:#fff;border:1px solid #828790;box-sizing:border-box;"></div>
<div style="left:663px;top:179px;width:94px;height:1px;background:#a8a8a8;"></div>
<div class="ic" style="left:666px;top:145px;"><svg width="32" height="32" viewBox="0 0 32 32"><defs><linearGradient id="wd1" x1="0" y1="0" x2="1" y2="1"><stop offset="0" stop-color="#f2f7fd"/><stop offset="1" stop-color="#bcd6f4"/></linearGradient><linearGradient id="wd2" x1="0" y1="0" x2="1" y2="1"><stop offset="0" stop-color="#f6f9fe"/><stop offset="1" stop-color="#cfdcf4"/></linearGradient></defs>
<path d="M6.5 1.5H24L30.9 8.4V30.5H6.5Z" fill="url(#wd1)" stroke="#5c86c2" stroke-width="1"/>
<path d="M6.5 30.5H30.9V8.4" fill="none" stroke="#2f4f8c" stroke-width="1.1"/>
<path d="M24 1.5V8.4H30.9Z" fill="#e9f1fb" stroke="#6a8ec4" stroke-width="0.9"/>
<rect x="19.3" y="6.6" width="6.4" height="6.8" fill="#a9c6ea"/><rect x="20.4" y="7.6" width="2.6" height="2.6" fill="#e6effa"/>
<path d="M18.5 15.5H26M17.5 17.4H26M17.5 19.5H26M9.5 21.5H26M9.5 23.4H26M20.5 25.5H26" stroke="#7a9fd2" stroke-width="0.9"/>
<rect x="1.4" y="3.6" width="15.2" height="15" fill="url(#wd2)" stroke="#3c60aa" stroke-width="1.4"/>
<text x="9" y="16" font-family="Liberation Sans, sans-serif" font-size="13.5" font-weight="bold" font-style="italic" fill="#2a4c9c" text-anchor="middle" textLength="12.5" lengthAdjust="spacingAndGlyphs">W</text>
</svg></div>
<span id="t35" class="t" style="left:703px;top:144px;font-size:13.3px;line-height:19px;color:#000;font-style:italic;letter-spacing:-0.843px;">Заявка на</span>
<span id="t36" class="t" style="left:703.3px;top:158px;font-size:13.3px;line-height:19px;color:#000;font-style:italic;letter-spacing:-0.976px;">регистра</span>
<div style="left:663px;top:481px;width:94px;height:16px;background:#f0f0f0;"></div>
<div style="left:680px;top:481px;width:34px;height:16px;background:#cdcdcd;"></div>
<div class="ic" style="left:668px;top:485px;"><svg width="7" height="8" viewBox="0 0 7 8"><path d="M5.6 0.6L1.6 4L5.6 7.4" fill="none" stroke="#555" stroke-width="2"/></svg></div>
<div class="ic" style="left:746px;top:485px;"><svg width="7" height="8" viewBox="0 0 7 8"><path d="M1.4 0.6L5.4 4L1.4 7.4" fill="none" stroke="#555" stroke-width="2"/></svg></div>
</div>
<div class="sec" id="statusbar">
<div style="left:8px;top:502px;width:757px;height:1px;background:#e3e3e3;"></div>
<span id="t37" class="t" style="left:11px;top:505px;font-size:12.5px;line-height:18px;color:#000;letter-spacing:-0.574px;">ИД задачи: 8611</span>
<span id="t38" class="t" style="left:143px;top:505px;font-size:12.5px;line-height:18px;color:#000;letter-spacing:-0.507px;">Дата изменения:</span>
<span id="t39" class="t" style="left:372px;top:505px;font-size:12.5px;line-height:18px;color:#000;letter-spacing:-0.263px;">Добавление</span>
<div style="left:138px;top:505px;width:1px;height:17px;background:#d7d7d7;"></div>
<div style="left:367px;top:505px;width:1px;height:17px;background:#d7d7d7;"></div>
<div class="ic" style="left:755px;top:512px;"><svg width="9" height="9" viewBox="0 0 9 9"><g fill="#bdbdbd"><rect x="6" y="0" width="2" height="2"/><rect x="3" y="3" width="2" height="2"/><rect x="6" y="3" width="2" height="2"/><rect x="0" y="6" width="2" height="2"/><rect x="3" y="6" width="2" height="2"/><rect x="6" y="6" width="2" height="2"/></g></svg></div>
</div>
<div class="sec" id="annotation">
<div class="ic" style="left:0px;top:48px;"><svg width="86" height="56" viewBox="0 0 86 56"><ellipse cx="42.5" cy="27.3" rx="38" ry="22.9" fill="none" stroke="#eb1a22" stroke-width="5"/></svg></div>
</div>
</div></body></html>
